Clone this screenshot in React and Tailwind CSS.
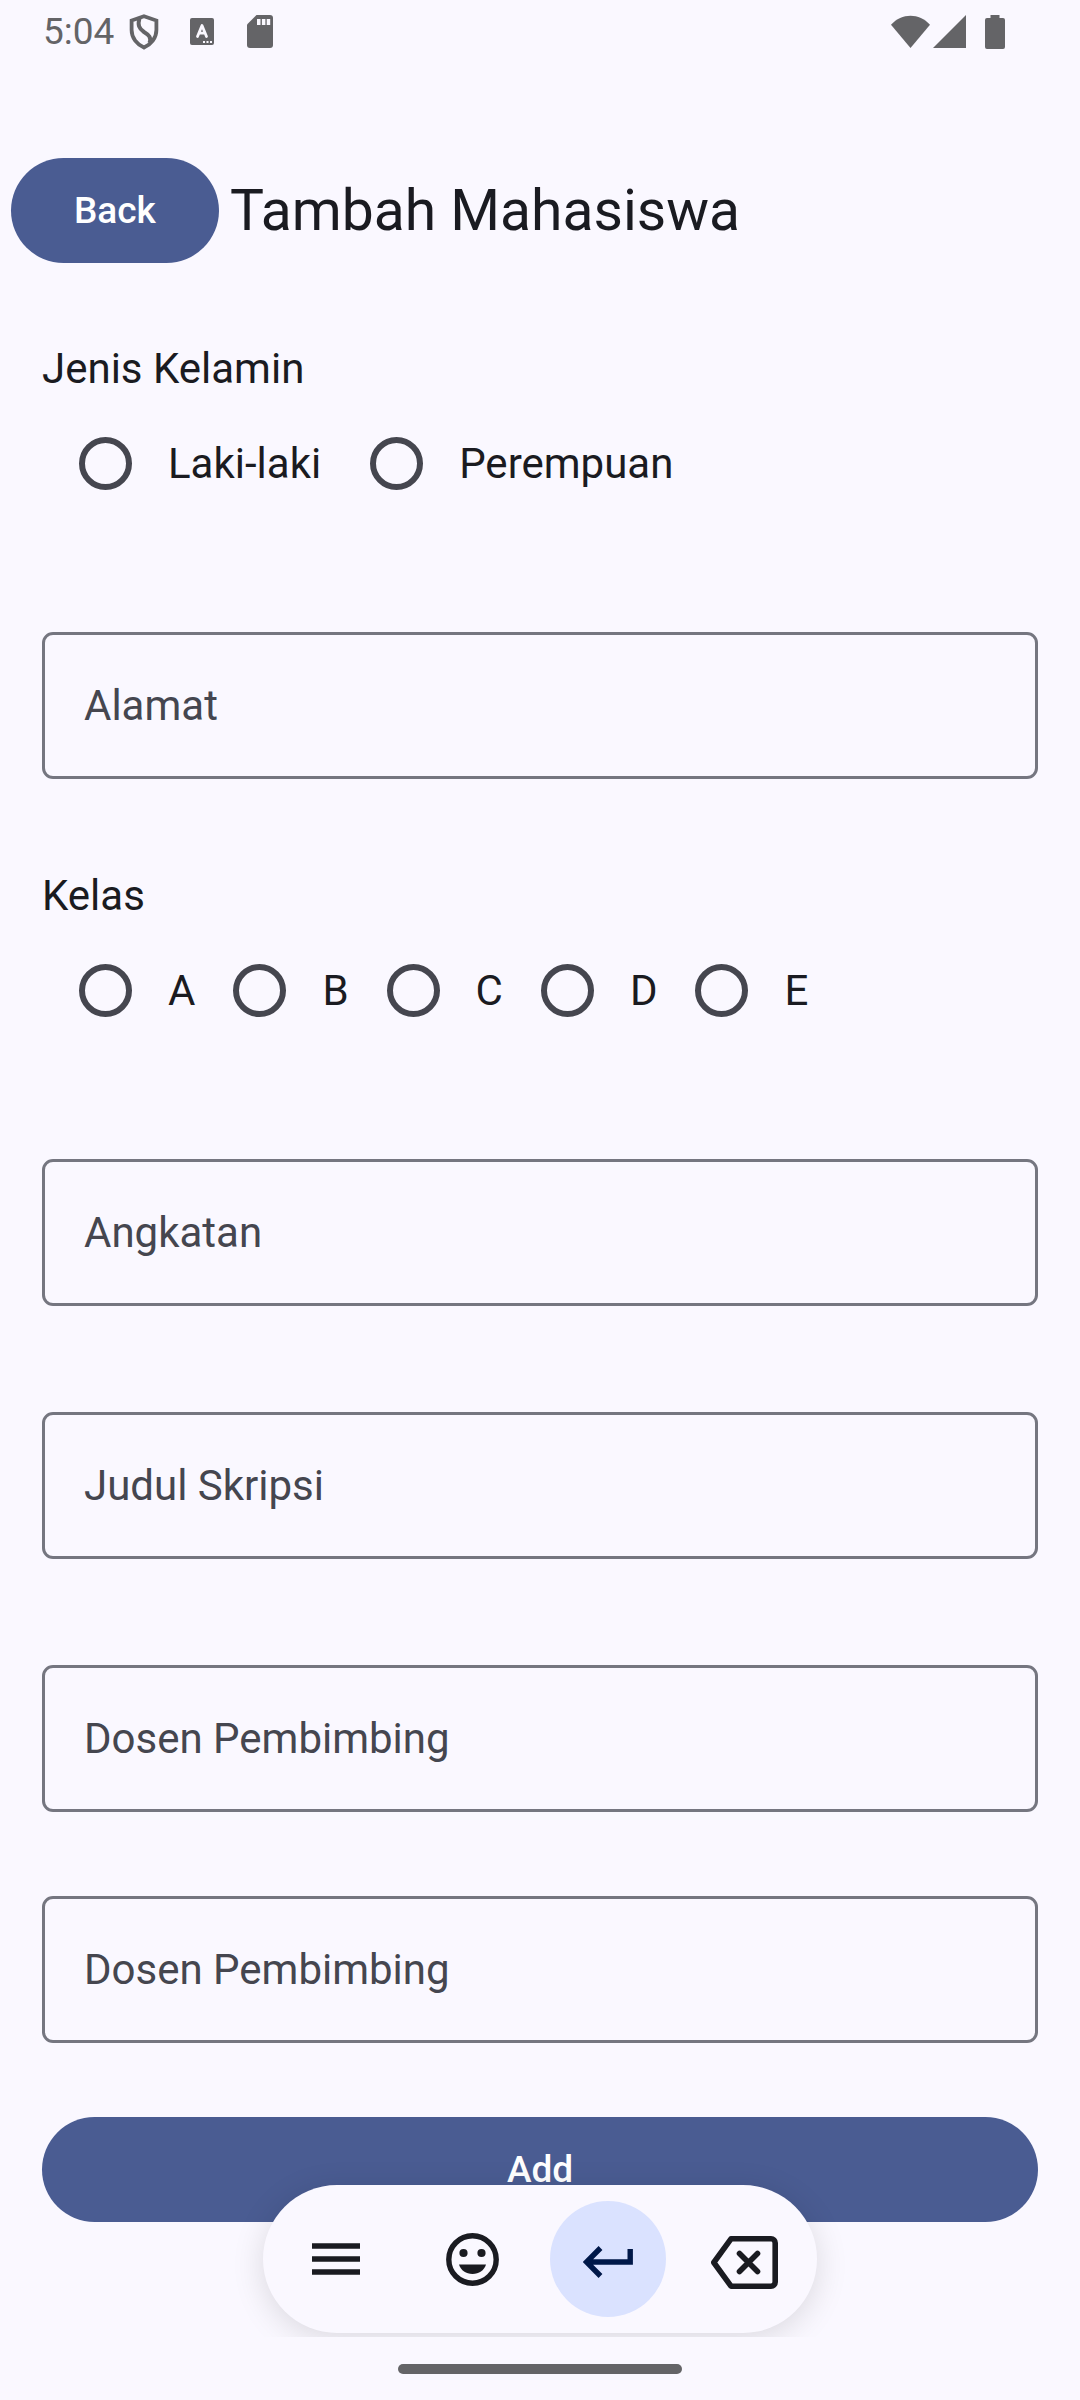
import React from "react";

function Shield() {
  return (
    <svg className="h-[36px] w-[30px]" viewBox="0 0 30 36" fill="none" stroke="#646467" aria-hidden="true">
      <path d="M15 2.2 27.4 6.5V16C27.4 24 22 30.5 15 33.6 8 30.5 2.6 24 2.6 16V6.5Z" strokeWidth="3.8" />
      <path d="M10.5 4C8.5 11 10 14.5 15 18C20 21 22.5 23.5 20.5 29" strokeWidth="4" />
    </svg>
  );
}

function LetterBadge() {
  return (
    <svg className="h-[27px] w-[24px]" viewBox="0 0 24 27" aria-hidden="true">
      <rect width="24" height="27" rx="2" fill="#646467" />
      <path d="M7.5 18.5 12 7.5 16.5 18.5M9 15.2H15" fill="none" stroke="#faf8ff" strokeWidth="2.8" strokeLinecap="round" strokeLinejoin="round" />
      <path d="M13 23h2v2h-2zM16.5 23h2v2h-2zM20 23h2v2h-2z" fill="#faf8ff" />
    </svg>
  );
}

function SdCard() {
  return (
    <svg className="h-[33px] w-[26px]" viewBox="0 0 26 33" aria-hidden="true">
      <path d="M9.5 0H23a3 3 0 0 1 3 3V30a3 3 0 0 1-3 3H3a3 3 0 0 1-3-3V9.5Z" fill="#646467" />
      <path d="M10 4h3.5v6H10zM14.9 4h3.5v6h-3.5zM19.7 4h3.5v6h-3.5z" fill="#faf8ff" />
    </svg>
  );
}

function StatusBar() {
  return (
    <header className="flex h-[63px] items-center justify-between pl-[43px] pr-[75px] text-[#646467]">
      <div className="flex items-center">
        <span className="w-[86px] text-[37px] leading-[42px]">5:04</span>
        <Shield />
        <span className="w-[31px]" />
        <LetterBadge />
        <span className="w-[33px]" />
        <SdCard />
      </div>
      <div className="flex items-center">
        <svg className="h-[34px] w-[39px]" viewBox="0 0 40 34" fill="currentColor" aria-hidden="true">
          <path d="M0 9.5C11-2.8 29-2.8 40 9.5L20 33.5Z" />
        </svg>
        <svg className="ml-[3px] h-[33px] w-[33px]" viewBox="0 0 33 33" fill="currentColor" aria-hidden="true">
          <path d="M33 0V33H0Z" />
        </svg>
        <svg className="ml-[19px] h-[34px] w-[20px]" viewBox="0 0 20 34" fill="currentColor" aria-hidden="true">
          <path d="M5.5 0h9v3H18a2 2 0 0 1 2 2V32a2 2 0 0 1-2 2H2a2 2 0 0 1-2-2V5a2 2 0 0 1 2-2h3.5Z" />
        </svg>
      </div>
    </header>
  );
}

function RadioGroup({ title, name, options, gap }) {
  return (
    <fieldset>
      <legend className="text-[42px] leading-[63px]">{title}</legend>
      <div className={`flex h-[126px] items-center ${gap}`}>
        {options.map((option) => (
          <label key={option} className="flex items-center">
            <input
              type="radio"
              name={name}
              value={option}
              className="ml-[37px] mr-[36px] size-[53px] appearance-none rounded-full border-[6px] border-[#45464f] checked:border-[16px] checked:border-[#4a5c92]"
            />
            <span className="text-[42px] leading-[63px]">{option}</span>
          </label>
        ))}
      </div>
    </fieldset>
  );
}

function Field({ label, className }) {
  return (
    <input
      type="text"
      aria-label={label}
      placeholder={label}
      className={`block h-[147px] w-full rounded-[11px] border-[3px] border-[#757680] bg-transparent px-[39px] text-[42px] leading-[63px] placeholder:text-[#45464f] ${className}`}
    />
  );
}

function Toolbar() {
  const button = "flex size-[116px] items-center justify-center rounded-full";
  return (
    <div className="absolute inset-x-0 bottom-[63px] flex justify-center overflow-hidden px-[42px] pt-[42px] pb-[4px]">
      <div className="flex items-center gap-[20px] rounded-full bg-[#faf8ff] px-[15px] py-[16px] shadow-[0_6px_32px_rgba(0,0,0,0.13)]">
        <button type="button" aria-label="Menu" className={button}>
          <svg className="h-[32px] w-[48px]" viewBox="0 0 48 32" stroke="#1a1b21" strokeWidth="5.6" aria-hidden="true">
            <path d="M0 3H48M0 16H48M0 29H48" />
          </svg>
        </button>
        <button type="button" aria-label="Emoji" className={button}>
          <svg className="size-[53px]" viewBox="0 0 53 53" fill="#1a1b21" aria-hidden="true">
            <circle cx="26.5" cy="26.5" r="23.7" fill="none" stroke="#1a1b21" strokeWidth="5.4" />
            <circle cx="17.5" cy="20" r="4.1" />
            <circle cx="35.5" cy="20" r="4.1" />
            <path d="M13 31.5H40C38 37.5 33 41 26.5 41S15 37.5 13 31.5Z" />
          </svg>
        </button>
        <button type="button" aria-label="Enter" className={`${button} bg-[#dae2ff]`}>
          <svg className="h-[38px] w-[50px]" viewBox="0 -6 50 38" fill="none" stroke="#001849" strokeWidth="5.4" aria-hidden="true">
            <path d="M47.2 3V16H3.5M17.5 2 3.5 16 17.5 30" />
          </svg>
        </button>
        <button type="button" aria-label="Backspace" className={button}>
          <svg className="h-[59px] w-[67px]" viewBox="0 -6 67 59" fill="none" stroke="#1a1b21" strokeWidth="5.6" strokeLinejoin="round" strokeLinecap="round" aria-hidden="true">
            <path d="M20 2.8H60a4.2 4.2 0 0 1 4.2 4.2V46a4.2 4.2 0 0 1-4.2 4.2H20L2.8 26.5ZM28.5 17.5 46.5 35.5M46.5 17.5 28.5 35.5" />
          </svg>
        </button>
      </div>
    </div>
  );
}

export default function App() {
  return (
    <div className="relative min-h-screen bg-[#faf8ff] pb-[177px] font-['Roboto',sans-serif] text-[#1a1b21]">
      <StatusBar />
      <div className="mt-[95px] flex items-center gap-[11px] px-[11px]">
        <button type="button" className="h-[105px] rounded-full bg-[#4a5c92] px-[63px] text-[37px] font-medium text-white">
          Back
        </button>
        <h1 className="text-[57px] leading-[74px]">Tambah Mahasiswa</h1>
      </div>
      <form className="px-[42px] pt-[74px]" onSubmit={(e) => e.preventDefault()}>
        <RadioGroup title="Jenis Kelamin" name="gender" options={["Laki-laki", "Perempuan"]} gap="gap-3" />
        <Field label="Alamat" className="mt-[106px]" />
        <div className="mt-[85px]">
          <RadioGroup title="Kelas" name="kelas" options={["A", "B", "C", "D", "E"]} gap="gap-px" />
        </div>
        <Field label="Angkatan" className="mt-[106px]" />
        <Field label="Judul Skripsi" className="mt-[106px]" />
        <Field label="Dosen Pembimbing" className="mt-[106px]" />
        <Field label="Dosen Pembimbing" className="mt-[84px]" />
        <button type="submit" className="mt-[74px] block h-[105px] w-full rounded-full bg-[#4a5c92] text-[37px] font-medium text-white">
          Add
        </button>
      </form>
      <Toolbar />
      <div className="absolute inset-x-0 bottom-[26px] mx-auto h-[10px] w-[284px] rounded-full bg-[#646467]" />
    </div>
  );
}
